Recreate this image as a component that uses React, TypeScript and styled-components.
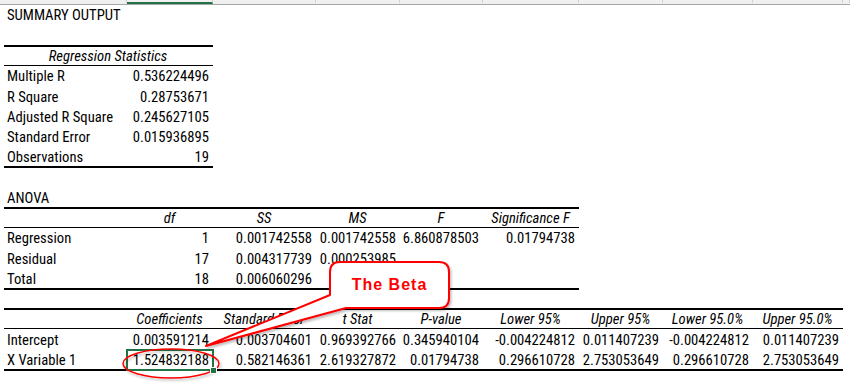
import styled, { createGlobalStyle } from 'styled-components';

const COLS = [123, 86, 103, 84, 83, 96, 84, 90, 90];
const ROW_H = 20.27;

const GlobalStyle = createGlobalStyle`
  html, body {
    margin: 0;
    padding: 0;
    background: #ffffff;
  }
  body {
    font-family: Roboto, "Liberation Sans", sans-serif;
    font-stretch: condensed;
    font-size: 14.67px;
    color: #000000;
  }
`;

type Align = 'left' | 'right' | 'center';
type Rule = 'none' | 'top' | 'head' | 'bottom';

const rules: Record<Rule, string> = {
  none: 'none',
  top: 'inset 0 1px 0 #000, 0 -1px 0 #000',
  head: 'inset 0 1px 0 #000, 0 -1px 0 #000, inset 0 -1px 0 #000',
  bottom: 'inset 0 -1px 0 #000, 0 1px 0 #000',
};

const Page = styled.div`
  position: relative;
  width: 850px;
  height: 383px;
  overflow: hidden;
`;

const Ruler = styled.div`
  display: flex;
  height: 4px;
  background: #f0f0f0;
  border-bottom: 1px solid #a6a6a6;
`;

const RulerCol = styled.div<{ $w?: number; $active?: boolean }>`
  flex: ${({ $w }) => ($w ? `0 0 ${$w}px` : '1')};
  box-sizing: border-box;
  border-right: 1px solid #d0d0d0;
  border-bottom: 2px solid ${({ $active }) => ($active ? '#217346' : 'transparent')};
`;

const Sheet = styled.div`
  padding: 0.2px 0 0 4px;
`;

const Row = styled.div<{ $span: number; $rule?: Rule }>`
  display: grid;
  grid-template-columns: ${({ $span }) =>
    COLS.slice(0, $span)
      .map((w) => `${w}px`)
      .join(' ')};
  width: max-content;
  height: ${ROW_H}px;
  box-shadow: ${({ $rule = 'none' }) => rules[$rule]};
`;

const Cell = styled.div<{ $align?: Align; $italic?: boolean; $span?: number; $selected?: boolean }>`
  grid-column: span ${({ $span = 1 }) => $span};
  position: ${({ $selected }) => ($selected ? 'relative' : 'static')};
  display: flex;
  align-items: flex-end;
  justify-content: ${({ $align = 'left' }) =>
    $align === 'right' ? 'flex-end' : $align === 'center' ? 'center' : 'flex-start'};
  padding: 0 4px 2px 3px;
  line-height: 16px;
  font-style: ${({ $italic }) => ($italic ? 'italic' : 'normal')};
  font-stretch: ${({ $italic }) => ($italic ? 'semi-condensed' : 'condensed')};
  white-space: nowrap;

  ${({ $selected }) =>
    $selected &&
    `
    &::after {
      content: '';
      position: absolute;
      inset: -1px;
      border: 2px solid #217346;
    }
    &::before {
      content: '';
      position: absolute;
      right: -4px;
      bottom: -4px;
      width: 5px;
      height: 5px;
      background: #217346;
      border: 1px solid #ffffff;
      z-index: 1;
    }
  `}
`;

const Overlay = styled.svg`
  position: absolute;
  left: 0;
  top: 0;
  width: 850px;
  height: 383px;
  pointer-events: none;
`;

const CalloutLabel = styled.div`
  position: absolute;
  left: 330px;
  top: 262px;
  width: 119px;
  height: 46px;
  display: flex;
  align-items: center;
  justify-content: center;
  font-family: "Liberation Sans", Arial, sans-serif;
  font-stretch: normal;
  font-size: 16px;
  font-weight: bold;
  letter-spacing: 1px;
  color: #ff0000;
`;

const regression = [
  ['Multiple R', '0.536224496'],
  ['R Square', '0.28753671'],
  ['Adjusted R Square', '0.245627105'],
  ['Standard Error', '0.015936895'],
  ['Observations', '19'],
];

const anovaHead = ['df', 'SS', 'MS', 'F', 'Significance F'];
const anova = [
  ['Regression', '1', '0.001742558', '0.001742558', '6.860878503', '0.01794738'],
  ['Residual', '17', '0.004317739', '0.000253985', '', ''],
  ['Total', '18', '0.006060296', '', '', ''],
];

const coefHead = [
  'Coefficients',
  'Standard Error',
  't Stat',
  'P-value',
  'Lower 95%',
  'Upper 95%',
  'Lower 95.0%',
  'Upper 95.0%',
];
const coefs = [
  ['Intercept', '0.003591214', '0.003704601', '0.969392766', '0.345940104', '-0.004224812', '0.011407239', '-0.004224812', '0.011407239'],
  ['X Variable 1', '1.524832188', '0.582146361', '2.619327872', '0.01794738', '0.296610728', '2.753053649', '0.296610728', '2.753053649'],
];

const bubblePath =
  'M340 262 H439 Q449 262 449 272 V298 Q449 308 439 308 H346 L206 346 L330 295 V272 Q330 262 340 262 Z';

export default function App() {
  return (
    <Page>
      <GlobalStyle />
      <Ruler>
        <RulerCol $w={127} />
        {COLS.slice(1).map((w, i) => (
          <RulerCol key={i} $w={w} $active={i === 0} />
        ))}
        <RulerCol />
      </Ruler>

      <Sheet>
        <Row $span={2}>
          <Cell>SUMMARY OUTPUT</Cell>
        </Row>
        <Row $span={2} />

        <Row $span={2} $rule="head">
          <Cell $span={2} $align="center" $italic>
            Regression Statistics
          </Cell>
        </Row>
        {regression.map(([label, value], i) => (
          <Row key={label} $span={2} $rule={i === regression.length - 1 ? 'bottom' : 'none'}>
            <Cell>{label}</Cell>
            <Cell $align="right">{value}</Cell>
          </Row>
        ))}
        <Row $span={2} />

        <Row $span={6}>
          <Cell>ANOVA</Cell>
        </Row>
        <Row $span={6} $rule="head">
          <Cell />
          {anovaHead.map((h) => (
            <Cell key={h} $align="center" $italic>
              {h}
            </Cell>
          ))}
        </Row>
        {anova.map((r, i) => (
          <Row key={r[0]} $span={6} $rule={i === anova.length - 1 ? 'bottom' : 'none'}>
            {r.map((v, j) => (
              <Cell key={j} $align={j === 0 ? 'left' : 'right'}>
                {v}
              </Cell>
            ))}
          </Row>
        ))}
        <Row $span={9} />

        <Row $span={9} $rule="head">
          <Cell />
          {coefHead.map((h) => (
            <Cell key={h} $align="center" $italic>
              {h}
            </Cell>
          ))}
        </Row>
        {coefs.map((r, i) => (
          <Row key={r[0]} $span={9} $rule={i === coefs.length - 1 ? 'bottom' : 'none'}>
            {r.map((v, j) => (
              <Cell key={j} $align={j === 0 ? 'left' : 'right'} $selected={i === 1 && j === 1}>
                {v}
              </Cell>
            ))}
          </Row>
        ))}
      </Sheet>

      <Overlay viewBox="0 0 850 383">
        <defs>
          <filter id="soft" x="-20%" y="-20%" width="140%" height="160%">
            <feDropShadow dx="1.5" dy="2" stdDeviation="1" floodColor="#000" floodOpacity="0.25" />
          </filter>
        </defs>
        <ellipse
          cx="171"
          cy="363.5"
          rx="48"
          ry="14.5"
          fill="none"
          stroke="#ff0000"
          strokeWidth="1.5"
          filter="url(#soft)"
        />
        <path d={bubblePath} fill="#ffffff" stroke="#ff0000" strokeWidth="2" strokeLinejoin="round" filter="url(#soft)" />
      </Overlay>
      <CalloutLabel>The Beta</CalloutLabel>
    </Page>
  );
}
